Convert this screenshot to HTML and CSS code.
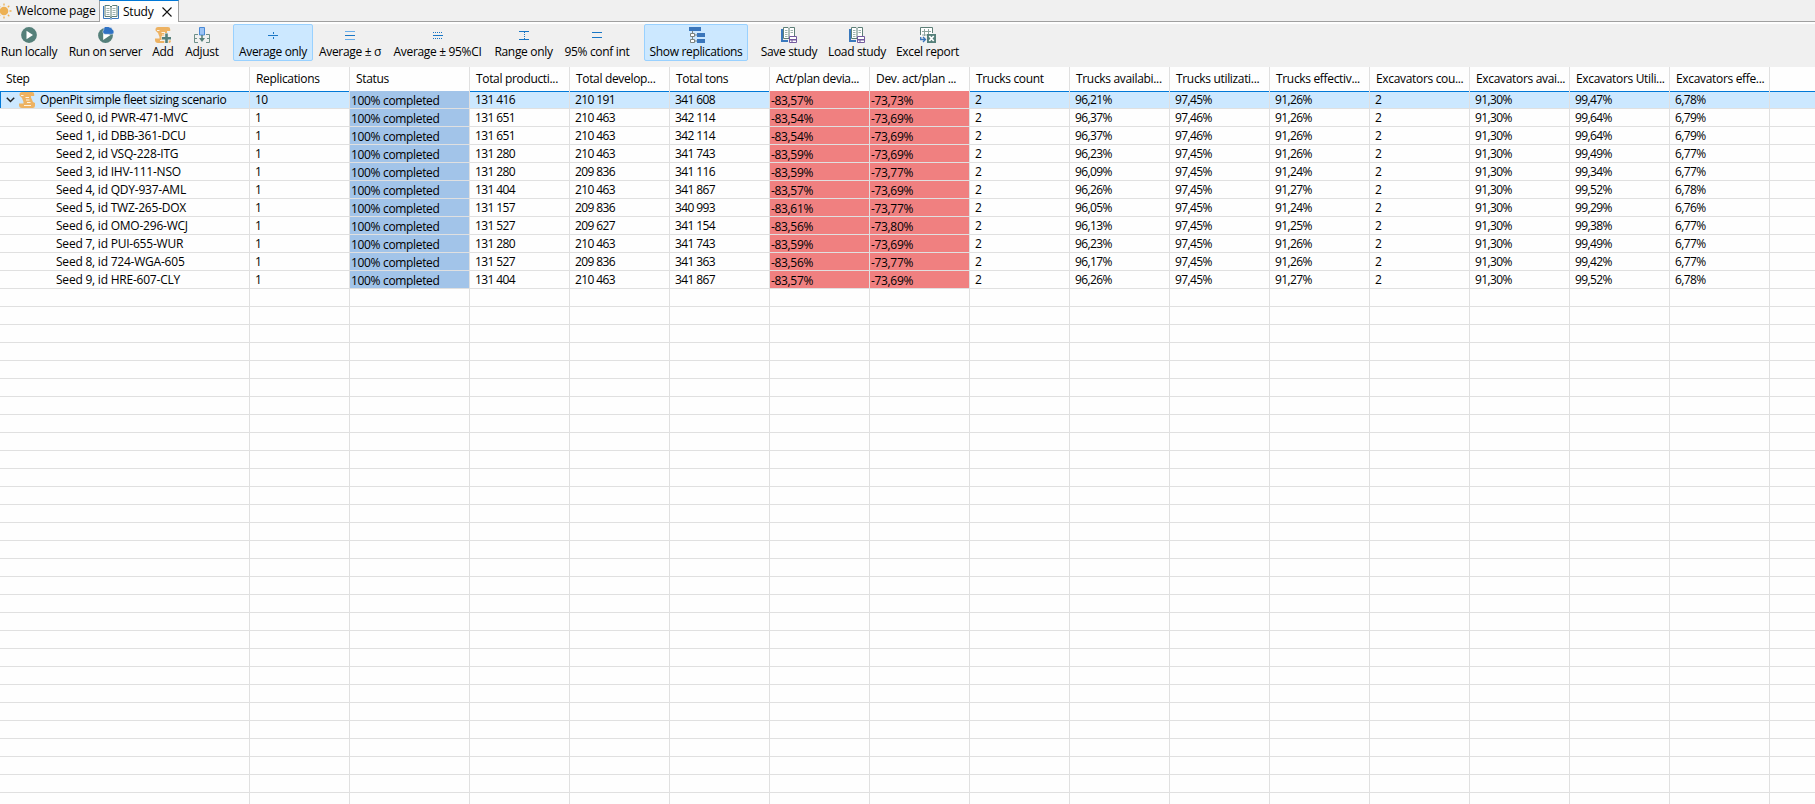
FILE: index.html
```
<!DOCTYPE html>
<html lang="en">
<head>
  <meta charset="UTF-8">
  <title>Study</title>
  <link rel="stylesheet" href="styles.css">
</head>
<body>
  <div class="tabs">
    <div class="tab tab-welcome">
      <svg width="16" height="16" viewBox="0 0 16 16"><circle cx="8" cy="8" r="4.300" fill="#edb155"/><path d="M8 0.5v2M8 13.500v2M0.500 8h2M13.500 8h2M2.700 2.700l1.500 1.500M11.800 11.800l1.500 1.500M2.700 13.300l1.500-1.500M11.800 4.200l1.500-1.500" stroke="#edb155" stroke-width="1.300"/></svg>
      <span>Welcome page</span>
    </div>
    <div class="tab tab-active">
      <svg width="16" height="16" viewBox="0 0 16 16"><path d="M.5 2v12.500h6.500l1 .8 1-.8h6.500V2" fill="#fff" stroke="#3a79bd"/><path d="M2 1.500h4.500L8 3l1.500-1.500H14v11H9L8 14l-1-1.500H2z" fill="#fff" stroke="#5d7f77"/><path d="M8 3v10.500" stroke="#5d7f77"/><path d="M3.500 4.500h3M3.500 6.500h3M3.500 8.500h3M3.500 10.500h3M9.500 4.500h3M9.500 6.500h3M9.500 8.500h3M9.500 10.500h3" stroke="#9fb5af"/></svg>
      <span>Study</span>
      <svg class="close" width="10" height="10" viewBox="0 0 10 10"><path d="M.5.5l9 9M9.500.5l-9 9" stroke="#111" stroke-width="1.100"/></svg>
    </div>
  </div>

  <div class="toolbar">
    <div class="tool run-local">
      <svg width="16" height="16" viewBox="0 0 16 16"><circle cx="8" cy="8" r="7.900" fill="#55807a"/><path d="M5.500 3.800v8.400L12 8z" fill="#fff"/></svg>
      <span>Run locally</span>
    </div>
    <div class="tool run-server">
      <svg width="16" height="16" viewBox="0 0 16 16"><circle cx="7.500" cy="8.500" r="7.400" fill="#55807a"/><path d="M5.200 4.500v8.500l7.300-5z" fill="#fff"/><path d="M7.500 7.300a2.500 2.500 0 0 1-1.800-4.400A3.300 3.300 0 0 1 11.500.3a3 3 0 0 1 3 2.300 2.500 2.500 0 0 1-.5 4.700z" fill="#2f72c4" stroke="#f0f0f0" stroke-width=".5"/></svg>
      <span>Run on server</span>
    </div>
    <div class="tool add">
      <svg width="16" height="16" viewBox="0 0 16 16"><use href="#scroll"/><path d="M11.500 6v10M6.500 11.300H16" stroke="#f0f0f0" stroke-width="4.500"/><path d="M11.500 6.500v9.500M7 11.300h9" stroke="#55807a" stroke-width="2.600"/></svg>
      <span>Add</span>
    </div>
    <div class="tool adjust">
      <svg width="16" height="16" viewBox="0 0 16 16"><path d="M4 7.500H.5v8H4M12 7.500h3.500v8H12M.5 11.500H3M13 11.500h2.500" fill="none" stroke="#6d8f88"/><path d="M5.500.5h5v7.500h-5z" fill="#9cc4f5" stroke="#4a8ad6"/><path d="M8 8v4" stroke="#55807a" stroke-width="1.500"/><path d="M5 11h6l-3 4z" fill="#55807a"/></svg>
      <span>Adjust</span>
    </div>
    <div class="tool average checked">
      <svg width="16" height="16" viewBox="0 0 16 16"><path d="M3 8.500h10M8.500 5v2M8.500 10v2" stroke="#1976c5"/></svg>
      <span>Average only</span>
    </div>
    <div class="tool sigma">
      <svg width="16" height="16" viewBox="0 0 16 16"><path d="M3 4.500h10M3 12.500h10" stroke="#6aaeea"/><path d="M3 8.500h10" stroke="#1976c5"/></svg>
      <span>Average ± σ</span>
    </div>
    <div class="tool ci">
      <svg width="16" height="16" viewBox="0 0 16 16"><path d="M3 5.500h10M3 11.500h10" stroke="#1976c5" stroke-dasharray="1 1"/><path d="M3 8.500h10" stroke="#1976c5"/></svg>
      <span>Average ± 95%CI</span>
    </div>
    <div class="tool range">
      <svg width="16" height="16" viewBox="0 0 16 16"><path d="M3 4.500h10M3 12.500h10" stroke="#1976c5"/><path d="M8.500 5v8" stroke="#1976c5" stroke-dasharray="1 1"/></svg>
      <span>Range only</span>
    </div>
    <div class="tool conf">
      <svg width="16" height="16" viewBox="0 0 16 16"><path d="M3 5.500h10M3 10.500h10" stroke="#1976c5"/></svg>
      <span>95% conf int</span>
    </div>
    <div class="tool show checked">
      <svg width="16" height="16" viewBox="0 0 16 16"><path d="M0 0h12v4H0zM8 6h8v4H8zM8 12h8v4H8z" fill="#3a76bb"/><path d="M3.500 4v8M5 8h3M5 14h3" stroke="#7c8480"/><path d="M1.500 6.500h4v3h-4zM1.500 12.500h4v3h-4z" fill="#fff" stroke="#7c8480"/></svg>
      <span>Show replications</span>
    </div>
    <div class="tool save">
      <svg width="16" height="16" viewBox="0 0 16 16"><use href="#book-disk"/></svg>
      <span>Save study</span>
    </div>
    <div class="tool load">
      <svg width="16" height="16" viewBox="0 0 16 16"><use href="#book-disk"/></svg>
      <span>Load study</span>
    </div>
    <div class="tool excel">
      <svg width="16" height="16" viewBox="0 0 16 16"><path d="M.5.500h12v9H.5z" fill="#fff"/><path d="M.5 8V.5h12V6" fill="none" stroke="#5d7f77"/><path d="M2 4.500h9M2 8h6M4.500 2v7M8.500 2v7" stroke="#8da59f"/><path d="M7 7h9v9H7z" fill="#55807a"/><path d="M9.300 9l4.400 5M13.700 9l-4.400 5" stroke="#fff" stroke-width="1.700"/><path d="M.7 10v2.500h4M3 10l2.500 2.500L3 15" fill="none" stroke="#3a76bb" stroke-width="1.300"/></svg>
      <span>Excel report</span>
    </div>
  </div>

  <table class="study">
    <colgroup id="cols"></colgroup>
    <thead><tr id="head"></tr></thead>
    <tbody id="rows"></tbody>
  </table>

  <!-- shared icon shapes -->
  <svg class="defs" width="0" height="0">
    <symbol id="scroll" viewBox="0 0 16 16">
      <path d="M3 0h10a2.200 2.200 0 0 1 2.200 2.200V4H12v1.500l2 4.500 2 1v2.800A2.200 2.200 0 0 1 13.800 16H3a3 3 0 0 1-3-3v-1.500h4.500V10L3 6 .5 3.500V2.500A2.500 2.500 0 0 1 3 0z" fill="#edb262"/>
      <path d="M2 3.500h2.500M6.500 5.500h3.500M7 8h3.500M8 10.500h3.500M5 13.500h7" stroke="#fdf3e2"/>
    </symbol>
    <symbol id="book-disk" viewBox="0 0 16 16">
      <path d="M1 2v12h6" fill="none" stroke="#3a79bd" stroke-width="2"/>
      <path d="M2.500.5H7l1 1 1-1h4.500v11H2.500z" fill="#fff" stroke="#5d7f77"/>
      <path d="M8 1.500v10" stroke="#5d7f77"/>
      <path d="M4 3.500h2.500M4 5.500h2.500M4 7.500h2.500M4 9.500h2.500M9.500 3.500H12M9.500 5.500H12" stroke="#9fb5af"/>
      <path d="M8.500 9.500h7v6h-7z" fill="#fff" stroke="#735a9e"/>
      <path d="M9 12h6v1.500H9zM10.500 13.500h1v2h-1z" fill="#735a9e"/>
    </symbol>
  </svg>

  <script>
    const columns = ['Step', 'Replications', 'Status', 'Total producti...', 'Total develop...', 'Total tons',
      'Act/plan devia...', 'Dev. act/plan ...', 'Trucks count', 'Trucks availabi...', 'Trucks utilizati...',
      'Trucks effectiv...', 'Excavators cou...', 'Excavators avai...', 'Excavators Utili...', 'Excavators effe...', ''];
    const widths = [250, 100, 120, 100, 100, 100, 100, 100, 100, 100, 100, 100, 100, 100, 100, 100, 45];

    // step | replications | production | development | tons | act/plan | dev | truck avail, util, eff | exc. util, eff
    const data = [
      'OpenPit simple fleet sizing scenario|10|131 416|210 191|341 608|-83,57%|-73,73%|96,21%|97,45%|91,26%|99,47%|6,78%',
      'Seed 0, id PWR-471-MVC|1|131 651|210 463|342 114|-83,54%|-73,69%|96,37%|97,46%|91,26%|99,64%|6,79%',
      'Seed 1, id DBB-361-DCU|1|131 651|210 463|342 114|-83,54%|-73,69%|96,37%|97,46%|91,26%|99,64%|6,79%',
      'Seed 2, id VSQ-228-ITG|1|131 280|210 463|341 743|-83,59%|-73,69%|96,23%|97,45%|91,26%|99,49%|6,77%',
      'Seed 3, id IHV-111-NSO|1|131 280|209 836|341 116|-83,59%|-73,77%|96,09%|97,45%|91,24%|99,34%|6,77%',
      'Seed 4, id QDY-937-AML|1|131 404|210 463|341 867|-83,57%|-73,69%|96,26%|97,45%|91,27%|99,52%|6,78%',
      'Seed 5, id TWZ-265-DOX|1|131 157|209 836|340 993|-83,61%|-73,77%|96,05%|97,45%|91,24%|99,29%|6,76%',
      'Seed 6, id OMO-296-WCJ|1|131 527|209 627|341 154|-83,56%|-73,80%|96,13%|97,45%|91,25%|99,38%|6,77%',
      'Seed 7, id PUI-655-WUR|1|131 280|210 463|341 743|-83,59%|-73,69%|96,23%|97,45%|91,26%|99,49%|6,77%',
      'Seed 8, id 724-WGA-605|1|131 527|209 836|341 363|-83,56%|-73,77%|96,17%|97,45%|91,26%|99,42%|6,77%',
      'Seed 9, id HRE-607-CLY|1|131 404|210 463|341 867|-83,57%|-73,69%|96,26%|97,45%|91,27%|99,52%|6,78%'
    ];
    const totalRows = 40;

    const chevron = '<svg class="chevron" width="9" height="6" viewBox="0 0 9 6"><path d="M.8.8l3.700 3.700L8.200.8" fill="none" stroke="#222" stroke-width="1.500"/></svg>';
    const scroll = '<svg class="scroll" width="16" height="16"><use href="#scroll"/></svg>';

    document.getElementById('cols').innerHTML = widths.map(w => `<col style="width:${w}px">`).join('');
    document.getElementById('head').innerHTML = columns.map(c => `<th>${c}</th>`).join('');

    let html = '';
    for (let i = 0; i < totalRows; i++) {
      let cells = new Array(columns.length).fill('');
      if (data[i]) {
        const d = data[i].split('|');
        cells = [d[0], d[1], '100% completed', d[2], d[3], d[4], d[5], d[6], '2', d[7], d[8], d[9], '2', '91,30%', d[10], d[11], ''];
      }
      html += `<tr${i === 0 ? ' class="selected"' : ''}>`;
      cells.forEach((text, c) => {
        let cls = 'num';
        if (data[i]) {
          if (c === 0) cls = i === 0 ? 'root' : 'seed';
          if (c === 2) cls = 'done';
          if (c === 6 || c === 7) cls = 'bad';
        }
        const icons = cls === 'root' ? chevron + scroll : '';
        html += `<td class="${cls}"><div class="cell">${icons}<span>${text}</span></div></td>`;
      });
      html += '</tr>';
    }
    document.getElementById('rows').innerHTML = html;
  </script>
</body>
</html>
```
FILE: styles.css
```
body {
  margin: 0;
  height: 804px;
  overflow: hidden;
  background-color: #fefefe;
  color: #000;
  font-family: 'Open Sans', 'Noto Sans', sans-serif;
  font-size: 12px;
  letter-spacing: -0.33px;
  white-space: nowrap;
}
svg {
  display: block;
  flex: none;
}
.defs {
  position: absolute;
}

/* tabs */
.tabs {
  display: flex;
  box-sizing: border-box;
  height: 22px;
  background-color: #f0f0f0;
  border-bottom: 1px solid #a0a0a0;
}
.tab {
  display: flex;
  align-items: center;
  box-sizing: border-box;
  line-height: 20px;
  letter-spacing: -0.22px;
}
.tab-welcome {
  width: 99px;
}
.tab-welcome svg {
  margin: 0 4px 0 -4px;
}
.tab-active {
  width: 80px;
  height: 22px;
  padding-left: 3px;
  background-color: #fefefe;
  border: 1px solid #a0a0a0;
  border-top-color: #0078d7;
  border-bottom: none;
}
.tab-active span {
  width: 30px;
  margin-left: 4px;
}
.close {
  margin-left: 9px;
}

/* toolbar */
.toolbar {
  display: flex;
  box-sizing: border-box;
  height: 45px;
  border-top: 2px solid #fefefe;
  background-color: #f0f0f0;
}
.tool {
  display: flex;
  flex: none;
  flex-direction: column;
  align-items: center;
  box-sizing: border-box;
  height: 37px;
  padding-top: 2px;
  border: 1px solid transparent;
  border-radius: 2px;
}
.tool span {
  line-height: 16px;
  margin-top: 1px;
}
.checked {
  background-color: #cce8ff;
  border-color: #99d1ff;
}
.run-local { width: 70px; margin-left: -6px; }
.run-server { width: 83px; }
.add { width: 32px; }
.adjust { width: 46px; }
.average { width: 80px; margin-left: 8px; }
.sigma { width: 74px; }
.ci { width: 101px; }
.range { width: 71px; }
.conf { width: 76px; }
.show { width: 104px; margin-left: 9px; }
.save { width: 68px; margin-left: 7px; }
.load { width: 68px; }
.excel { width: 73px; }
.show svg {
  margin-left: 2px;
}

/* table */
.study {
  width: 1815px;
  table-layout: fixed;
  border-collapse: separate;
  border-spacing: 0;
}
.study th {
  height: 24px;
  padding: 0 0 0 6px;
  border-right: 1px solid #e0e0e0;
  font-weight: normal;
  text-align: left;
  line-height: 24px;
}
.study td {
  height: 17px;
  padding: 0;
  border-right: 1px solid #e0e0e0;
  border-bottom: 1px solid #e0e0e0;
}
.study th:last-child, .study td:last-child {
  border-right: none;
}
.cell {
  display: flex;
  align-items: center;
  box-sizing: border-box;
  height: 17px;
  padding-left: 5px;
  line-height: 17px;
}
.num .cell {
  letter-spacing: -0.6px;
}
.selected .cell {
  background-color: #cce8ff;
  box-shadow: inset 0 1px #0078d7;
}
.root .cell {
  padding-left: 6px;
  box-shadow: inset 1px 1px #0078d7;
}
.seed .cell {
  padding-left: 56px;
  letter-spacing: -0.22px;
}
.done .cell, .bad .cell {
  padding: 2px 0 0 1px;
  box-shadow: none;
}
.done .cell {
  background-color: #a2c4e9;
}
.bad .cell {
  background-color: #f08080;
}
.scroll {
  margin: 1px 5px 0 4px;
}
```
